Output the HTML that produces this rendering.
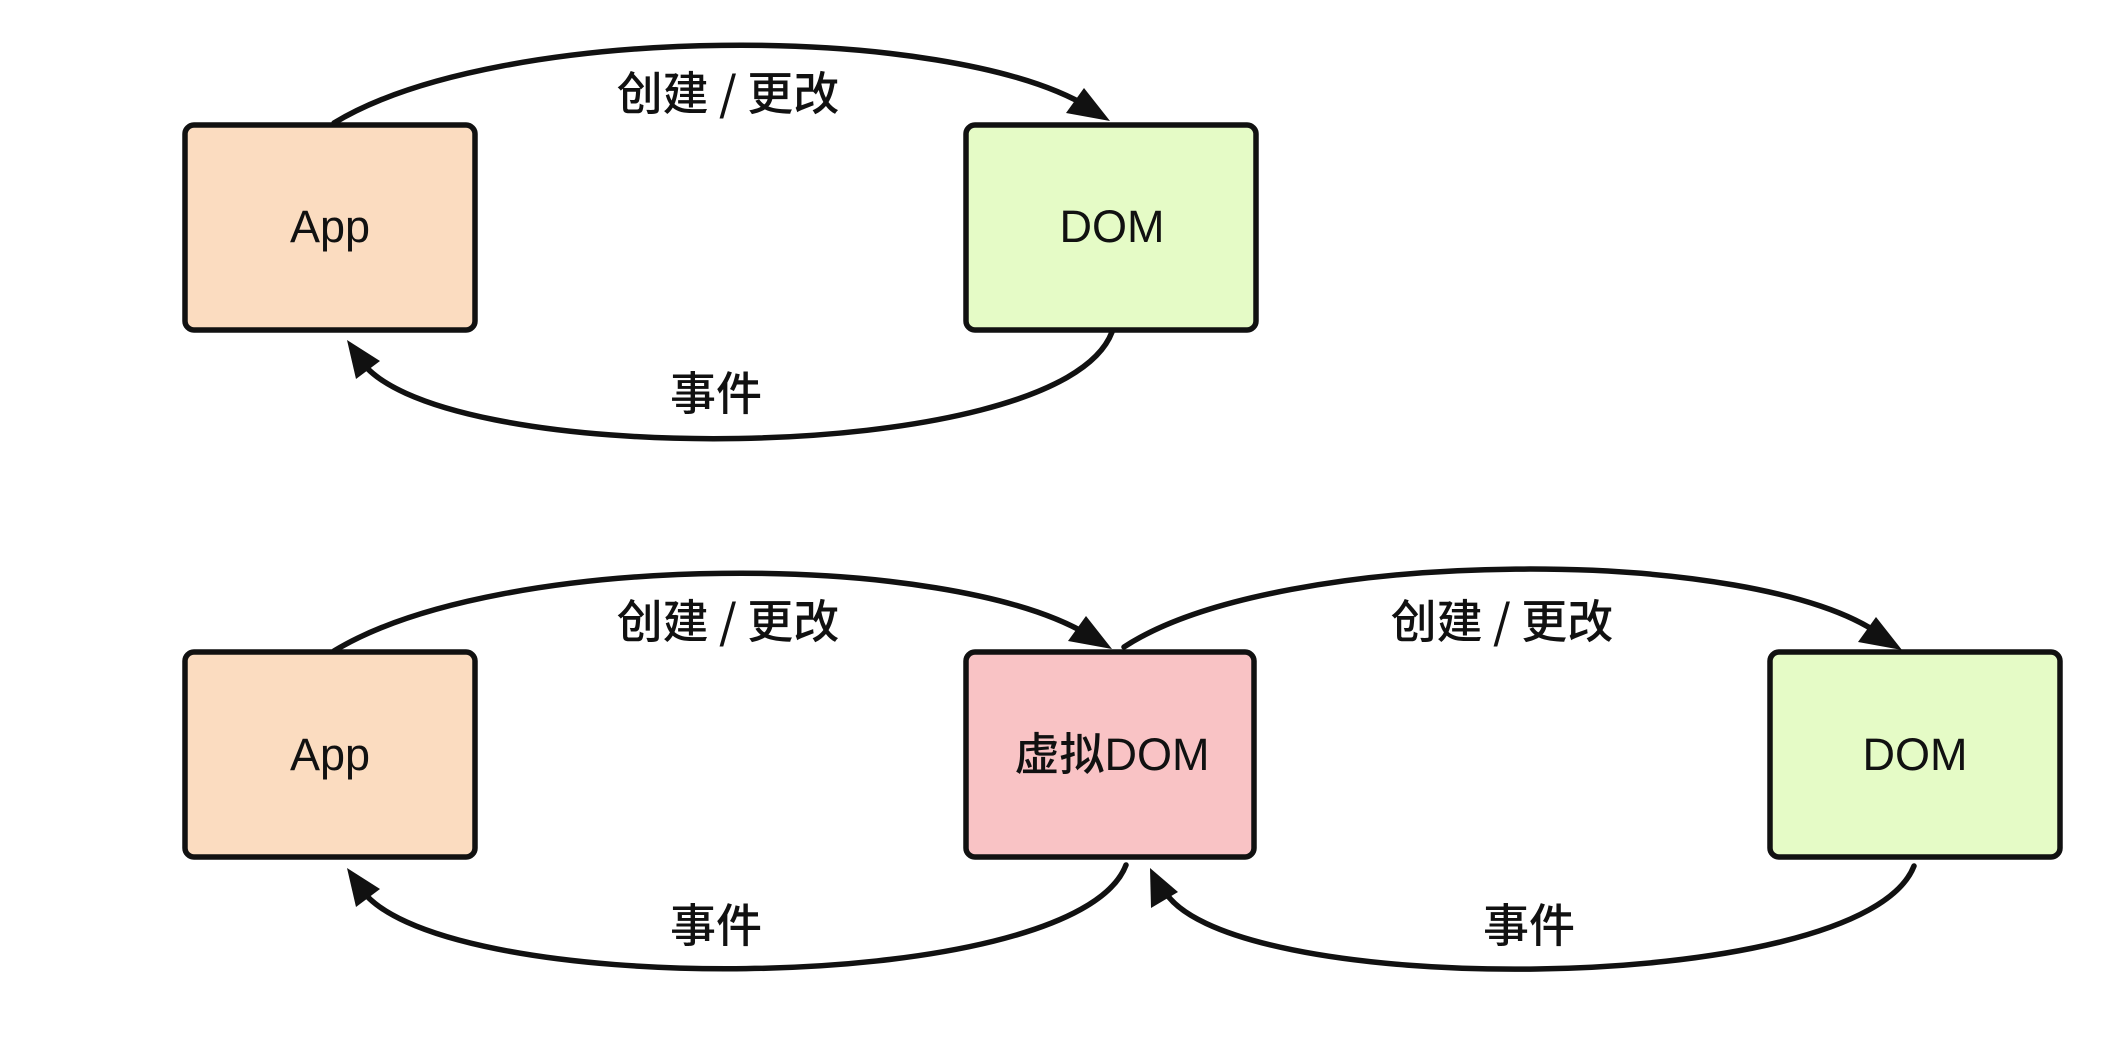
<!DOCTYPE html>
<html><head><meta charset="utf-8"><style>
html,body{margin:0;padding:0;background:#fff;width:2122px;height:1042px;overflow:hidden}
svg text{font-family:"Liberation Sans","Noto Sans CJK SC",sans-serif;fill:#111}
.b{font-weight:500;font-family:"Noto Sans CJK SC",sans-serif}
</style></head><body>
<svg width="2122" height="1042" viewBox="0 0 2122 1042" xmlns="http://www.w3.org/2000/svg">
<g fill="none" stroke="#111" stroke-width="5.5" stroke-linecap="round">
<path d="M334,123 C500,22 950,22 1090,108"/>
<path d="M1112,332 C1060,470 420,470 358,356"/>
<path d="M334,651 C500,550 950,550 1090,636"/>
<path d="M1124,647 C1280,545 1760,545 1882,636"/>
<path d="M1126,865 C1075,1000 420,1000 358,884"/>
<path d="M1914,866 C1862,1000 1210,1000 1162,886"/>
</g>
<g fill="#111">
<polygon points="1110,121 1066,113 1084,88"/>
<polygon points="347,340 356,379 380,361"/>
<polygon points="1112,649 1068,641 1086,616"/>
<polygon points="1902,650 1858,642 1876,617"/>
<polygon points="347,868 356,907 380,889"/>
<polygon points="1150,868 1151,908 1178,892"/>
</g>
<g stroke="#111" stroke-width="5.5">
<rect x="185" y="125" width="290" height="205" rx="9" fill="#fbdcc0"/>
<rect x="966" y="125" width="290" height="205" rx="9" fill="#e5fbc6"/>
<rect x="185" y="652" width="290" height="205" rx="9" fill="#fbdcc0"/>
<rect x="966" y="652" width="288" height="205" rx="9" fill="#f9c3c5"/>
<rect x="1770" y="652" width="290" height="205" rx="9" fill="#e5fbc6"/>
</g>
<g font-size="45" text-anchor="middle">
<text x="330" y="242">App</text>
<text x="1112" y="242">DOM</text>
<text x="330" y="770">App</text>
<text x="1112" y="770"><tspan class="b">虚拟</tspan>DOM</text>
<text x="1915" y="770">DOM</text>
</g>
<g font-size="46" text-anchor="middle">
<text class="b" x="728" y="110" xml:space="preserve">创建 / 更改</text>
<text class="b" x="716" y="410">事件</text>
<text class="b" x="728" y="638" xml:space="preserve">创建 / 更改</text>
<text class="b" x="1502" y="638" xml:space="preserve">创建 / 更改</text>
<text class="b" x="716" y="942">事件</text>
<text class="b" x="1529" y="942">事件</text>
</g>
</svg>
</body></html>
